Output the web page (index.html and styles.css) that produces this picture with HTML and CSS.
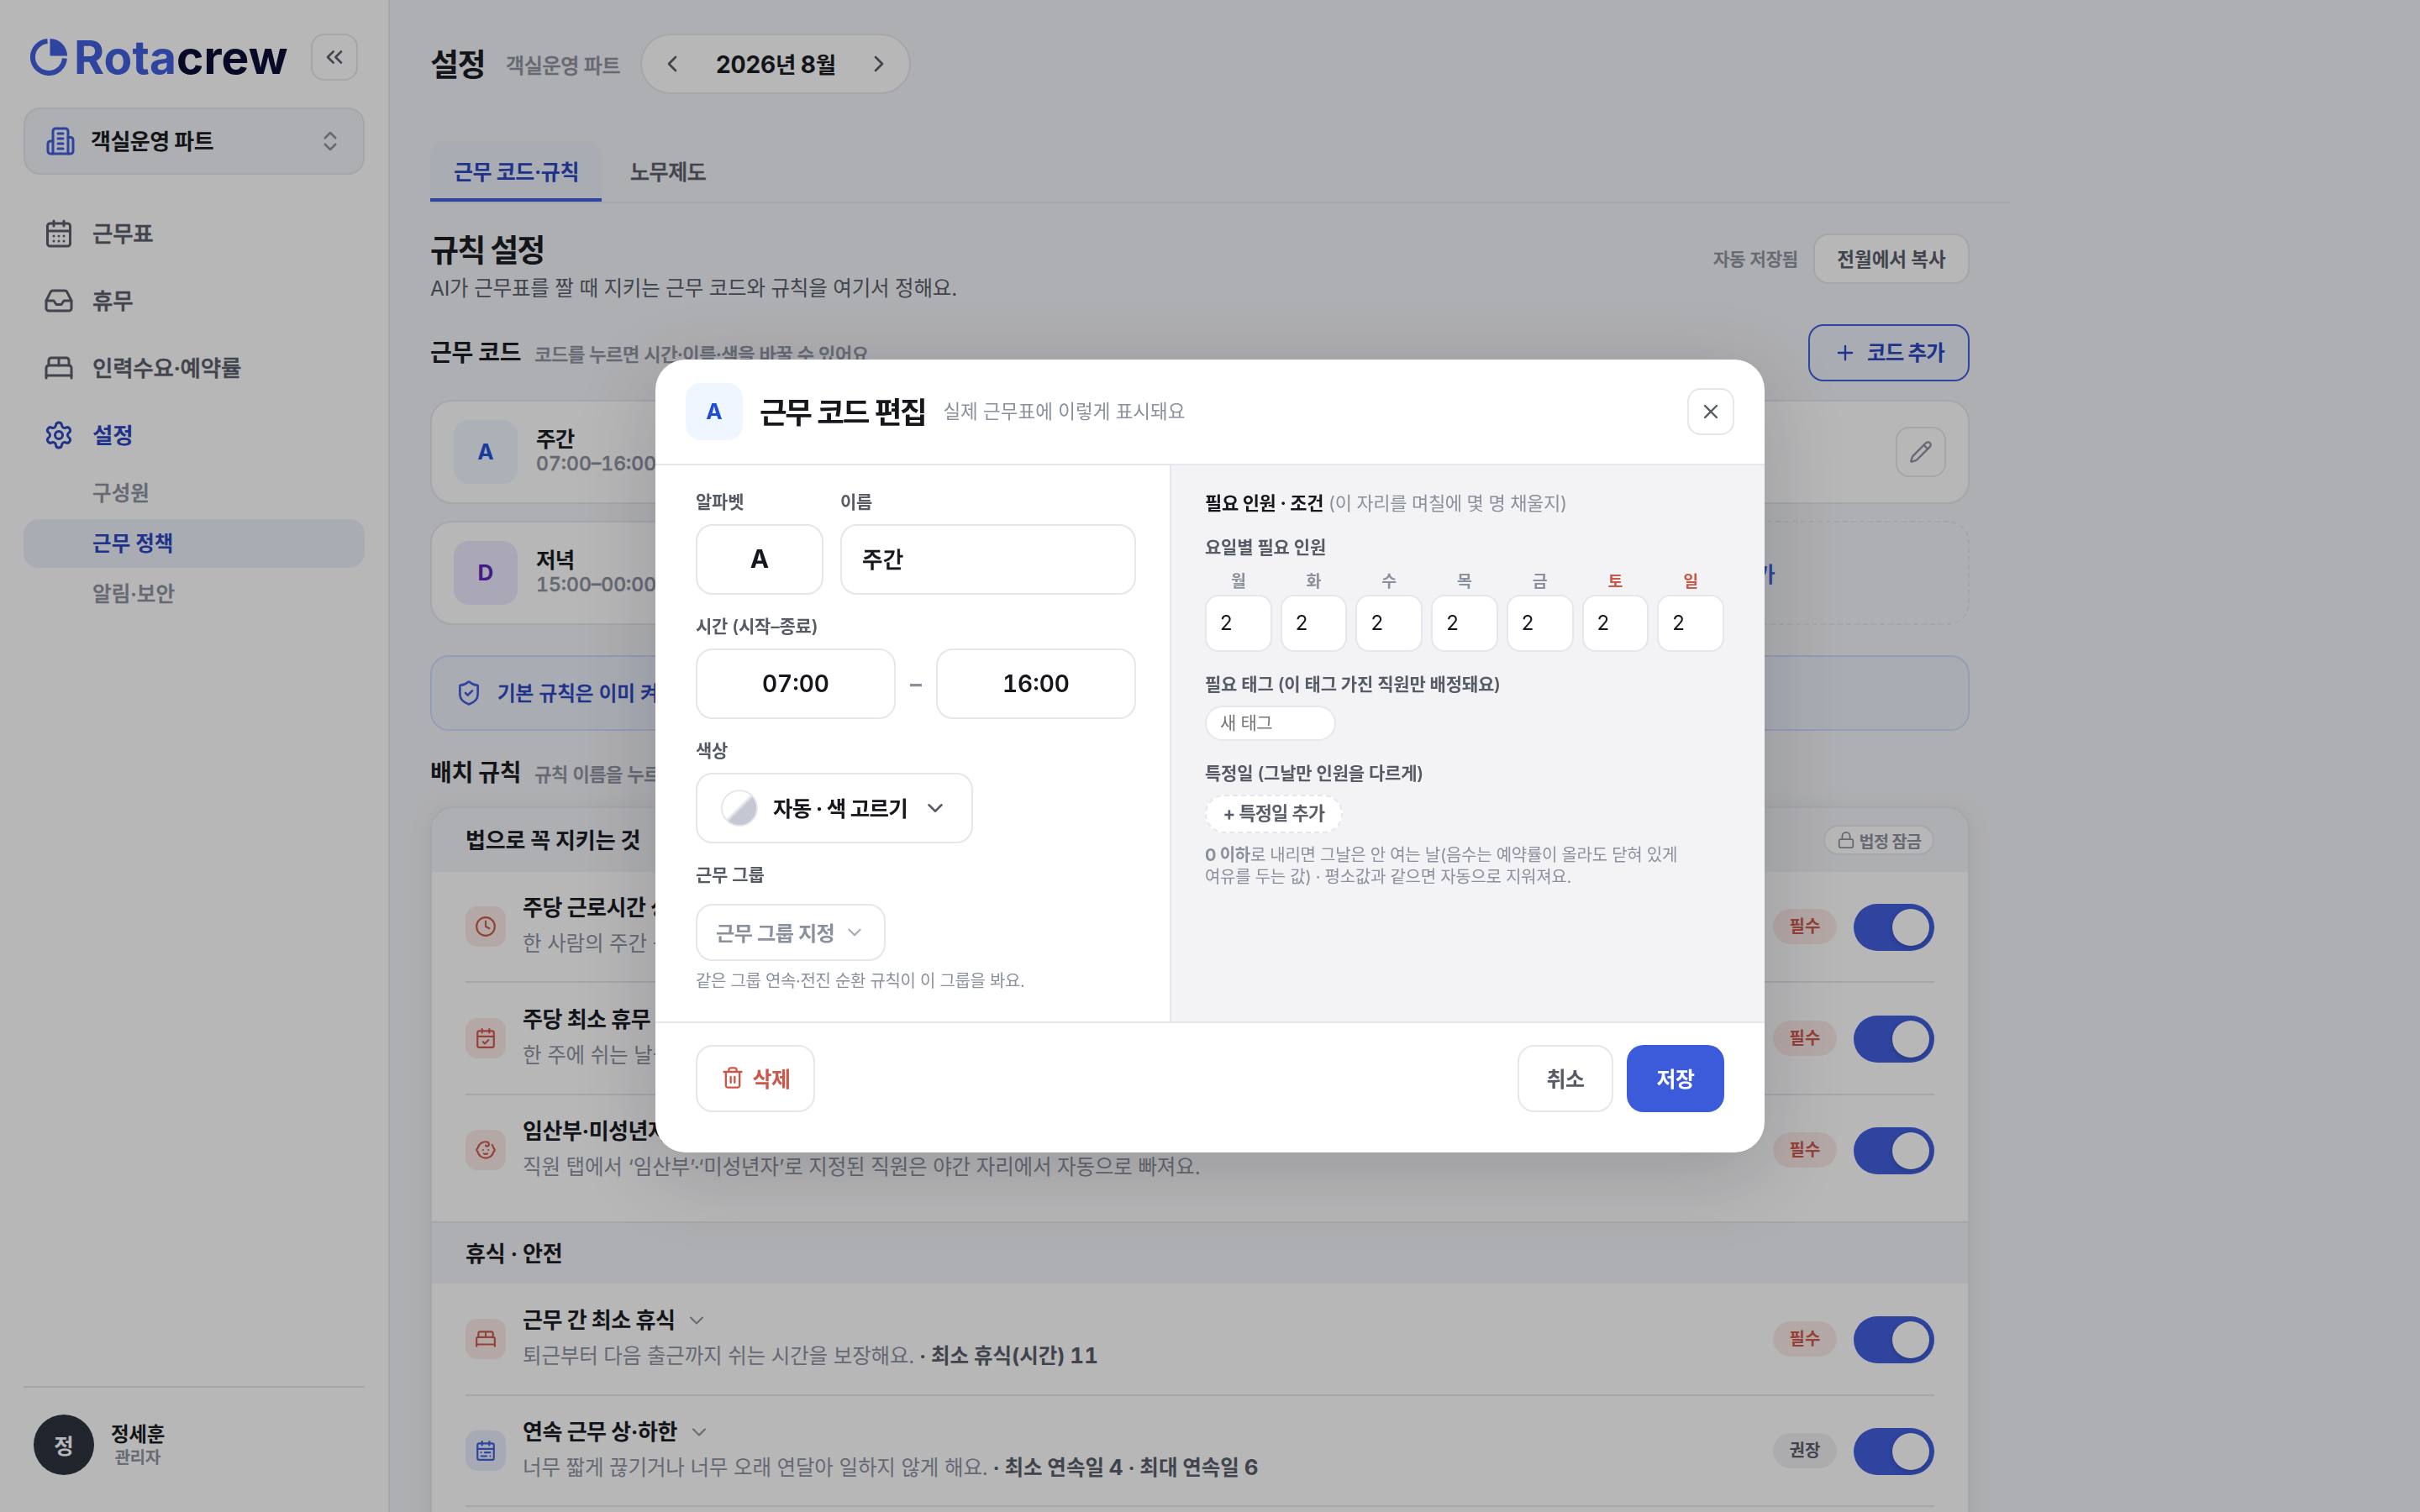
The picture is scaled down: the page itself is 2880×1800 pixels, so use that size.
FILE: index.html
```html
<!DOCTYPE html>
<html lang="ko">
<head>
<meta charset="utf-8">
<title>Rotacrew · 설정</title>
<link rel="stylesheet" href="styles.css">
</head>
<body>
<svg class="sprite" aria-hidden="true">
  <symbol id="i-chevrons-left" viewBox="0 0 24 24"><path d="m11 17-5-5 5-5M18 17l-5-5 5-5"/></symbol>
  <symbol id="i-building" viewBox="0 0 24 24"><path d="M6 22V4a2 2 0 0 1 2-2h8a2 2 0 0 1 2 2v18Z"/><path d="M6 12H4a2 2 0 0 0-2 2v6a2 2 0 0 0 2 2h2"/><path d="M18 9h2a2 2 0 0 1 2 2v9a2 2 0 0 1-2 2h-2"/><path d="M10 6h4M10 10h4M10 14h4M10 18h4"/></symbol>
  <symbol id="i-updown" viewBox="0 0 24 24"><path d="m7 15 5 5 5-5M7 9l5-5 5 5"/></symbol>
  <symbol id="i-cal-days" viewBox="0 0 24 24"><path d="M8 2v4M16 2v4M3 10h18"/><rect width="18" height="18" x="3" y="4" rx="2"/><path d="M8 14h.01M12 14h.01M16 14h.01M8 18h.01M12 18h.01M16 18h.01"/></symbol>
  <symbol id="i-inbox" viewBox="0 0 24 24"><path d="M22 12h-6l-2 3h-4l-2-3H2"/><path d="M5.45 5.11 2 12v6a2 2 0 0 0 2 2h16a2 2 0 0 0 2-2v-6l-3.45-6.89A2 2 0 0 0 16.76 4H7.24a2 2 0 0 0-1.79 1.11z"/></symbol>
  <symbol id="i-bed" viewBox="0 0 24 24"><path d="M2 20v-8a2 2 0 0 1 2-2h16a2 2 0 0 1 2 2v8"/><path d="M4 10V6a2 2 0 0 1 2-2h12a2 2 0 0 1 2 2v4M12 4v6M2 18h20"/></symbol>
  <symbol id="i-gear" viewBox="0 0 24 24"><path d="M9.671 4.136a2.34 2.34 0 0 1 4.659 0 2.34 2.34 0 0 0 3.319 1.915 2.34 2.34 0 0 1 2.33 4.033 2.34 2.34 0 0 0 0 3.831 2.34 2.34 0 0 1-2.33 4.033 2.34 2.34 0 0 0-3.319 1.915 2.34 2.34 0 0 1-4.659 0 2.34 2.34 0 0 0-3.32-1.915 2.34 2.34 0 0 1-2.33-4.033 2.34 2.34 0 0 0 0-3.831A2.34 2.34 0 0 1 6.35 6.051a2.34 2.34 0 0 0 3.319-1.915"/><circle cx="12" cy="12" r="3"/></symbol>
  <symbol id="i-left" viewBox="0 0 24 24"><path d="m15 18-6-6 6-6"/></symbol>
  <symbol id="i-right" viewBox="0 0 24 24"><path d="m9 18 6-6-6-6"/></symbol>
  <symbol id="i-down" viewBox="0 0 24 24"><path d="m6 9 6 6 6-6"/></symbol>
  <symbol id="i-plus" viewBox="0 0 24 24"><path d="M5 12h14M12 5v14"/></symbol>
  <symbol id="i-x" viewBox="0 0 24 24"><path d="M18 6 6 18M6 6l12 12"/></symbol>
  <symbol id="i-pencil" viewBox="0 0 24 24"><path d="M21.174 6.812a1 1 0 0 0-3.986-3.987L3.842 16.174a2 2 0 0 0-.5.83l-1.321 4.352a.5.5 0 0 0 .623.622l4.353-1.32a2 2 0 0 0 .83-.497z"/><path d="m15 5 4 4"/></symbol>
  <symbol id="i-shield" viewBox="0 0 24 24"><path d="M20 13c0 5-3.5 7.5-7.66 8.95a1 1 0 0 1-.67-.01C7.5 20.5 4 18 4 13V6a1 1 0 0 1 1-1c2 0 4.5-1.2 6.24-2.72a1.17 1.17 0 0 1 1.52 0C14.51 3.81 17 5 19 5a1 1 0 0 1 1 1z"/><path d="m9 12 2 2 4-4"/></symbol>
  <symbol id="i-lock" viewBox="0 0 24 24"><rect width="18" height="11" x="3" y="11" rx="2"/><path d="M7 11V7a5 5 0 0 1 10 0v4"/></symbol>
  <symbol id="i-clock" viewBox="0 0 24 24"><circle cx="12" cy="12" r="10"/><path d="M12 6v6l4 2"/></symbol>
  <symbol id="i-cal-check" viewBox="0 0 24 24"><path d="M8 2v4M16 2v4M3 10h18"/><rect width="18" height="18" x="3" y="4" rx="2"/><path d="m9 16 2 2 4-4"/></symbol>
  <symbol id="i-baby" viewBox="0 0 24 24"><path d="M9 12h.01M15 12h.01M10 16c.5.3 1.2.5 2 .5s1.5-.2 2-.5"/><path d="M19 6.3a9 9 0 0 1 1.8 3.9 2 2 0 0 1 0 3.6 9 9 0 0 1-17.6 0 2 2 0 0 1 0-3.6A9 9 0 0 1 12 3c2 0 3.5 1.1 3.5 2.5s-.9 2.5-2 2.5c-.8 0-1.5-.4-1.5-1"/></symbol>
  <symbol id="i-cal-range" viewBox="0 0 24 24"><path d="M8 2v4M16 2v4M3 10h18"/><rect width="18" height="18" x="3" y="4" rx="2"/><path d="M17 14h-6M13 18H7M7 14h.01M17 18h.01"/></symbol>
  <symbol id="i-trash" viewBox="0 0 24 24"><path d="M3 6h18M19 6v14c0 1-1 2-2 2H7c-1 0-2-1-2-2V6M8 6V4c0-1 1-2 2-2h4c1 0 2 1 2 2v2M10 11v6M14 11v6"/></symbol>
</svg>

<div class="app">
  <aside class="sidebar">
    <div class="brand-row">
      <div class="brand">
        <svg class="brand-mark" viewBox="0 0 44 44"><path d="M20.500 3.100A19 19 0 1 0 40.900 23.500" fill="none" stroke="currentColor" stroke-width="6"/><path d="M23.500 0v20.500H44A20.500 20.500 0 0 0 23.500 0z" fill="currentColor"/></svg>
        <span class="wordmark">Rota<span class="wordmark-dark">crew</span></span>
      </div>
      <button class="collapse"><svg class="icon s32"><use href="#i-chevrons-left"/></svg></button>
    </div>
    <button class="team">
      <svg class="icon s36 blue"><use href="#i-building"/></svg>
      <span class="team-name">객실운영 파트</span>
      <svg class="icon s30 faint"><use href="#i-updown"/></svg>
    </button>
    <nav class="nav">
      <a class="nav-item medium"><svg class="icon s36"><use href="#i-cal-days"/></svg><span>근무표</span></a>
      <a class="nav-item medium"><svg class="icon s36"><use href="#i-inbox"/></svg><span>휴무</span></a>
      <a class="nav-item medium"><svg class="icon s36"><use href="#i-bed"/></svg><span>인력수요·예약률</span></a>
      <a class="nav-item nav-item--active"><svg class="icon s36"><use href="#i-gear"/></svg><span>설정</span></a>
      <a class="nav-sub medium">구성원</a>
      <a class="nav-sub nav-sub--active">근무 정책</a>
      <a class="nav-sub medium">알림·보안</a>
    </nav>
    <div class="user">
      <div class="avatar">정</div>
      <div class="user-text"><span class="user-name">정세훈</span><span class="user-role medium">관리자</span></div>
    </div>
  </aside>

  <main class="main">
    <header class="topbar">
      <h1 class="page-title">설정</h1>
      <span class="page-team medium">객실운영 파트</span>
      <div class="month">
        <svg class="icon s32"><use href="#i-left"/></svg>
        <span class="month-label"><span class="num">2026</span>년 <span class="num">8</span>월</span>
        <svg class="icon s32"><use href="#i-right"/></svg>
      </div>
    </header>
    <div class="tabs">
      <a class="tab tab--active">근무 코드·규칙</a>
      <a class="tab medium">노무제도</a>
    </div>

    <div class="content">
      <div class="page-head">
        <div>
          <h2 class="h2">규칙 설정</h2>
          <p class="lead">AI가 근무표를 짤 때 지키는 근무 코드와 규칙을 여기서 정해요.</p>
        </div>
        <div class="page-actions">
          <span class="saved medium">자동 저장됨</span>
          <button class="btn-copy">전월에서 복사</button>
        </div>
      </div>

      <div class="section-head section-head--codes">
        <h3 class="h3">근무 코드</h3>
        <span class="section-note medium">코드를 누르면 시간·이름·색을 바꿀 수 있어요</span>
        <button class="btn-add"><svg class="icon s28"><use href="#i-plus"/></svg><span>코드 추가</span></button>
      </div>
      <div class="codes">
        <div class="code"><span class="chip chip--a">A</span><div class="code-text"><span class="code-name">주간</span><span class="code-time medium">07:00–16:00</span></div></div>
        <div class="code"></div>
        <div class="code"><button class="edit"><svg class="icon s28"><use href="#i-pencil"/></svg></button></div>
        <div class="code"><span class="chip chip--d">D</span><div class="code-text"><span class="code-name">저녁</span><span class="code-time medium">15:00–00:00</span></div></div>
        <div class="code"></div>
        <div class="code code--new"><svg class="icon s28"><use href="#i-plus"/></svg>코드 추가</div>
      </div>

      <div class="banner"><svg class="icon s32"><use href="#i-shield"/></svg><span class="medium">기본 규칙은 이미 켜져 있어요</span></div>

      <div class="section-head section-head--rules">
        <h3 class="h3">배치 규칙</h3>
        <span class="section-note medium">규칙 이름을 누르면</span>
      </div>

      <div class="rules">
        <div class="group-head"><span class="group-name">법으로 꼭 지키는 것</span>
          <span class="lock"><svg class="icon s22"><use href="#i-lock"/></svg>법정 잠금</span></div>
        <div class="group-body">
          <div class="rule">
            <span class="rule-icon rule-icon--red"><svg class="icon s26"><use href="#i-clock"/></svg></span>
            <div class="rule-text"><div class="rule-title">주당 근로시간 상한</div><div class="rule-desc">한 사람의 주간 근로</div></div>
            <span class="tag tag--red">필수</span><span class="toggle"></span>
          </div>
          <div class="rule rule--roomy">
            <span class="rule-icon rule-icon--red"><svg class="icon s26"><use href="#i-cal-check"/></svg></span>
            <div class="rule-text"><div class="rule-title">주당 최소 휴무</div><div class="rule-desc">한 주에 쉬는 날을</div></div>
            <span class="tag tag--red">필수</span><span class="toggle"></span>
          </div>
          <div class="rule">
            <span class="rule-icon rule-icon--red"><svg class="icon s26"><use href="#i-baby"/></svg></span>
            <div class="rule-text"><div class="rule-title">임산부·미성년자</div><div class="rule-desc">직원 탭에서 ‘임산부’·‘미성년자’로 지정된 직원은 야간 자리에서 자동으로 빠져요.</div></div>
            <span class="tag tag--red">필수</span><span class="toggle"></span>
          </div>
        </div>
        <div class="group-head group-head--next"><span class="group-name">휴식 · 안전</span></div>
        <div class="group-body">
          <div class="rule rule--roomy">
            <span class="rule-icon rule-icon--red"><svg class="icon s26"><use href="#i-bed"/></svg></span>
            <div class="rule-text"><div class="rule-title">근무 간 최소 휴식<svg class="icon s28 thin"><use href="#i-down"/></svg></div><div class="rule-desc">퇴근부터 다음 출근까지 쉬는 시간을 보장해요. <b>· 최소 휴식(시간) <span class="num">11</span></b></div></div>
            <span class="tag tag--red">필수</span><span class="toggle"></span>
          </div>
          <div class="rule">
            <span class="rule-icon rule-icon--blue"><svg class="icon s26"><use href="#i-cal-range"/></svg></span>
            <div class="rule-text"><div class="rule-title">연속 근무 상·하한<svg class="icon s28 thin"><use href="#i-down"/></svg></div><div class="rule-desc">너무 짧게 끊기거나 너무 오래 연달아 일하지 않게 해요. <b>· 최소 연속일 <span class="num">4</span> · 최대 연속일 <span class="num">6</span></b></div></div>
            <span class="tag">권장</span><span class="toggle"></span>
          </div>
          <div class="rule"></div>
        </div>
      </div>
    </div>
  </main>
</div>

<div class="overlay">
  <section class="modal">
    <header class="modal-head">
      <span class="chip chip--modal">A</span>
      <h2 class="modal-title">근무 코드 편집</h2>
      <span class="modal-sub">실제 근무표에 이렇게 표시돼요</span>
      <button class="close"><svg class="icon s28"><use href="#i-x"/></svg></button>
    </header>
    <div class="modal-body">
      <div class="pane">
        <div class="field-row">
          <div class="field field--letter"><label class="label">알파벳</label><div class="input input--center input--letter">A</div></div>
          <div class="field field--grow"><label class="label">이름</label><div class="input input--name medium">주간</div></div>
        </div>
        <div class="field">
          <label class="label">시간 (시작–종료)</label>
          <div class="times"><div class="input input--center input--time">07:00</div><span class="dash">–</span><div class="input input--center input--time">16:00</div></div>
        </div>
        <div class="field">
          <label class="label">색상</label>
          <button class="color-btn"><span class="swatch"></span><span class="color-name">자동 · 색 고르기</span><svg class="icon s30"><use href="#i-down"/></svg></button>
        </div>
        <div class="field">
          <label class="label label--group">근무 그룹</label>
          <button class="group-btn"><span>근무 그룹 지정</span><svg class="icon s26"><use href="#i-down"/></svg></button>
          <p class="hint">같은 그룹 연속·전진 순환 규칙이 이 그룹을 봐요.</p>
        </div>
      </div>
      <div class="pane pane--side">
        <p class="side-title"><b>필요 인원 · 조건</b> (이 자리를 며칠에 몇 명 채울지)</p>
        <label class="label label--days">요일별 필요 인원</label>
        <div class="days">
          <div class="day"><span class="day-name">월</span><div class="day-input">2</div></div>
          <div class="day"><span class="day-name">화</span><div class="day-input">2</div></div>
          <div class="day"><span class="day-name">수</span><div class="day-input">2</div></div>
          <div class="day"><span class="day-name">목</span><div class="day-input">2</div></div>
          <div class="day"><span class="day-name">금</span><div class="day-input">2</div></div>
          <div class="day day--off"><span class="day-name">토</span><div class="day-input">2</div></div>
          <div class="day day--off"><span class="day-name">일</span><div class="day-input">2</div></div>
        </div>
        <label class="label label--tag">필요 태그 (이 태그 가진 직원만 배정돼요)</label>
        <div class="tag-input">새 태그</div>
        <label class="label label--date">특정일 (그날만 인원을 다르게)</label>
        <button class="date-btn medium">+ 특정일 추가</button>
        <p class="note"><b>0 이하</b>로 내리면 그날은 안 여는 날(음수는 예약률이 올라도 닫혀 있게<br>여유를 두는 값) · 평소값과 같으면 자동으로 지워져요.</p>
      </div>
    </div>
    <footer class="modal-foot">
      <button class="btn btn--delete"><svg class="icon s28"><use href="#i-trash"/></svg>삭제</button>
      <button class="btn btn--cancel">취소</button>
      <button class="btn btn--save">저장</button>
    </footer>
  </section>
</div>
</body>
</html>
```
FILE: styles.css
```css
* { box-sizing: border-box; margin: 0; padding: 0; }

:root {
  --ink: #15171c;
  --body: #565b66;
  --muted: #8b909d;
  --line: #e6e7ec;
  --canvas: #f3f4f6;
  --blue: #3b5bdb;
  --blue-deep: #2742bd;
  --blue-soft: #edf0fa;
  --red: #cd5649;
}

html, body { width: 2880px; height: 1800px; overflow: hidden; }

body {
  background: var(--canvas);
  color: var(--ink);
  font-family: Inter, "Noto Sans CJK KR", sans-serif;
}

button { font: inherit; color: inherit; background: none; border: 0; letter-spacing: inherit; }
b { font-weight: 700; }
.medium { -webkit-text-stroke: 0.5px currentColor; }

.sprite { display: none; }
.icon { fill: none; stroke: currentColor; stroke-width: 2; stroke-linecap: round; stroke-linejoin: round; flex: none; }
.s22 { width: 22px; height: 22px; }
.s26 { width: 26px; height: 26px; }
.s28 { width: 28px; height: 28px; }
.s30 { width: 30px; height: 30px; }
.s32 { width: 32px; height: 32px; }
.s36 { width: 36px; height: 36px; }
.blue { color: var(--blue); }
.faint { color: var(--muted); }
.thin { color: var(--muted); stroke-width: 1.75; }

.app { display: flex; width: 2880px; height: 1800px; overflow: hidden; }

/* Sidebar */
.sidebar { width: 464px; flex: none; background: #fff; border-right: 2px solid var(--line); padding: 40px 28px 44px; display: flex; flex-direction: column; }
.brand-row { display: flex; align-items: center; justify-content: space-between; height: 56px; padding: 0 8px; }
.brand { display: flex; align-items: center; gap: 8px; color: var(--blue); }
.brand-mark { width: 44px; height: 44px; }
.wordmark { font-size: 55px; line-height: 56px; font-weight: 700; letter-spacing: 0.1px; margin-top: -1px; }
.wordmark-dark { color: #05062e; }
.collapse { width: 56px; height: 56px; border: 2px solid var(--line); border-radius: 16px; display: flex; align-items: center; justify-content: center; color: var(--body); }
.team { margin-top: 32px; height: 80px; border: 2px solid var(--line); border-radius: 20px; background: var(--canvas); display: flex; align-items: center; padding: 0 24px; }
.team-name { margin-left: 18px; padding-top: 1px; flex: 1; text-align: left; font-size: 26px; line-height: 40px; font-weight: 700; letter-spacing: -0.5px; }
.nav { margin-top: 30px; display: flex; flex-direction: column; color: var(--body); font-weight: 500; }
.nav-item { height: 80px; display: flex; align-items: center; gap: 22px; padding-left: 24px; font-size: 26.5px; letter-spacing: -0.2px; }
.nav-item span { padding-bottom: 3px; }
.nav-item--active { color: var(--blue-deep); font-weight: 700; }
.nav-sub { height: 58px; line-height: 59px; padding-left: 82px; border-radius: 18px; font-size: 24.5px; color: var(--muted); margin-bottom: 2px; letter-spacing: 0.1px; }
.nav-sub--active { background: var(--blue-soft); color: var(--blue-deep); font-weight: 700; }
.user { margin-top: auto; border-top: 2px solid var(--line); height: 106px; padding: 32px 12px 0; display: flex; align-items: center; gap: 20px; }
.avatar { width: 72px; height: 72px; border-radius: 50%; background: #292e39; color: #fff; display: flex; align-items: center; justify-content: center; font-size: 25.5px; font-weight: 700; padding-bottom: 1px; }
.user-text { display: flex; flex-direction: column; align-items: center; }
.user-name { font-size: 23.5px; line-height: 29px; font-weight: 700; letter-spacing: -0.3px; }
.user-role { font-size: 19.8px; line-height: 26px; font-weight: 500; color: var(--muted); }

/* Main column */
.main { width: 1976px; padding: 40px 48px 0; flex: none; }
.topbar { height: 72px; display: flex; align-items: center; white-space: nowrap; }
.page-title { padding-top: 4px; font-size: 37px; line-height: 48px; font-weight: 700; letter-spacing: -1.5px; }
.page-team { margin-left: 25px; font-size: 24px; font-weight: 500; letter-spacing: -0.4px; color: var(--muted); }
.month { margin-left: 24px; width: 322px; height: 72px; border: 2px solid var(--line); border-radius: 36px; background: #fff; display: flex; align-items: center; justify-content: space-between; padding: 0 20px; color: var(--body); }
.month-label { color: var(--ink); font-size: 26.5px; font-weight: 700; letter-spacing: -0.35px; padding-bottom: 2px; }
.num { font-size: 1.06em; font-feature-settings: "tnum"; }
.tabs { margin-top: 56px; height: 74px; border-bottom: 2px solid var(--line); display: flex; gap: 6px; font-size: 25px; font-weight: 500; letter-spacing: -0.4px; color: var(--body); width: 1880px; white-space: nowrap; }
.tab { height: 72px; line-height: 75px; padding: 0 28px; }
.tab--active { width: 204px; background: var(--blue-soft); color: var(--blue-deep); font-weight: 700; border-bottom: 4px solid var(--blue); border-radius: 16px 16px 0 0; }

.content { width: 1832px; padding-top: 32px; }
.page-head { height: 112px; display: flex; justify-content: space-between; }
.h2 { font-size: 37px; line-height: 50px; font-weight: 700; letter-spacing: -1.9px; }
.lead { padding-top: 1px; font-size: 24.5px; line-height: 37px; letter-spacing: -0.18px; color: var(--body); }
.page-actions { margin-top: 4px; height: 60px; display: flex; align-items: center; gap: 18px; }
.saved { font-size: 21px; font-weight: 500; letter-spacing: -0.18px; padding-bottom: 2px; color: var(--muted); }
.btn-copy { width: 186px; height: 60px; border: 2px solid var(--line); border-radius: 18px; background: #fff; font-size: 22.5px; font-weight: 700; color: var(--body); padding-bottom: 3px; }

.section-head { display: flex; align-items: center; }
.section-head--codes { height: 68px; }
.section-head--rules { height: 52px; margin: 24px 0 14px; }
.h3 { font-size: 28px; line-height: 40px; font-weight: 700; letter-spacing: -0.3px; }
.section-note { margin-left: 16px; font-size: 22px; font-weight: 500; letter-spacing: -0.38px; padding-bottom: 1px; color: var(--muted); }
.btn-add { margin-left: auto; width: 192px; height: 68px; border: 2px solid var(--blue); border-radius: 18px; background: var(--blue-soft); color: var(--blue-deep); font-size: 24.5px; font-weight: 700; letter-spacing: -0.8px; display: flex; align-items: center; justify-content: center; gap: 12px; }
.btn-add span { padding-bottom: 3px; }

.codes { margin-top: 22px; display: grid; grid-template-columns: repeat(3, 1fr); grid-auto-rows: 124px; gap: 20px; }
.code { background: #fff; border: 2px solid var(--line); border-radius: 26px; padding: 0 26px; display: flex; align-items: center; }
.chip { width: 76px; height: 76px; border-radius: 18px; display: flex; align-items: center; justify-content: center; font-size: 26px; font-weight: 700; flex: none; padding-bottom: 1px; }
.chip--a, .chip--modal { background: #eff6ff; color: #1d4ed8; }
.chip--d { background: #ede9fe; color: #5b21b6; }
.code-text { margin-left: 22px; display: flex; flex-direction: column; }
.code-name { font-size: 25.5px; line-height: 28px; font-weight: 700; letter-spacing: -0.8px; }
.code-time { font-size: 23px; line-height: 30px; font-weight: 500; color: var(--muted); font-feature-settings: "tnum"; }
.edit { margin-left: auto; width: 60px; height: 60px; border: 2px solid var(--line); border-radius: 16px; display: flex; align-items: center; justify-content: center; color: var(--muted); }
.code--new { background: none; border-style: dashed; color: var(--blue); justify-content: center; gap: 10px; font-size: 24.5px; font-weight: 600; }

.banner { margin-top: 36px; height: 90px; border: 2px solid #cfd8fb; border-radius: 22px; background: var(--blue-soft); color: var(--blue-deep); display: flex; align-items: center; gap: 18px; padding: 0 28px; font-size: 23.5px; font-weight: 500; }
.banner span { padding-bottom: 3px; }
.banner .icon { color: var(--blue); }

.rules { border: 2px solid var(--line); border-radius: 28px; background: #fff; overflow: hidden; box-shadow: 0 4px 28px rgba(15, 18, 25, .08); }
.group-head { height: 76px; background: var(--canvas); padding: 0 40px; display: flex; align-items: center; justify-content: space-between; font-size: 26px; font-weight: 700; letter-spacing: -0.15px; }
.group-name { padding-bottom: 3px; }
.group-head--next { height: 74px; border-top: 2px solid var(--line); }
.lock { height: 36px; width: 132px; border: 2px solid var(--line); border-radius: 18px; background: #fff; color: var(--muted); display: flex; align-items: center; justify-content: center; gap: 5px; font-size: 19.5px; letter-spacing: -0.5px; }
.group-body { padding: 0 40px 18px; }
.rule { height: 132px; border-bottom: 2px solid var(--line); display: flex; align-items: center; }
.rule--roomy { height: 134px; }
.rule:last-child { border-bottom-color: transparent; }
.rule-icon { width: 48px; height: 48px; border-radius: 14px; display: flex; align-items: center; justify-content: center; flex: none; }
.rule-icon--red { background: #fbeae6; color: var(--red); }
.rule-icon--blue { background: #e9edfa; color: var(--blue); }
.rule-text { margin-left: 20px; flex: 1; padding-bottom: 3px; }
.rule-title { font-size: 26px; line-height: 42px; font-weight: 700; letter-spacing: -0.45px; display: flex; align-items: center; gap: 12px; }
.rule-desc { font-size: 24.5px; line-height: 42px; letter-spacing: -0.14px; color: var(--muted); white-space: nowrap; }
.rule-desc b { color: var(--body); margin-left: -1px; letter-spacing: 0; }
.tag { width: 76px; height: 42px; border-radius: 21px; background: #efeff3; color: var(--body); font-size: 20px; line-height: 42px; font-weight: 700; text-align: center; }
.tag--red { background: #fbeae6; color: var(--red); }
.toggle { margin: 2px 0 0 20px; width: 96px; height: 56px; border-radius: 28px; background: var(--blue); padding: 6px; display: flex; justify-content: flex-end; }
.toggle::after { content: ""; width: 44px; height: 44px; border-radius: 50%; background: #fff; box-shadow: 0 2px 6px rgba(0, 0, 0, .2); }

/* Dialog */
.overlay { position: fixed; inset: 0; background: rgba(15, 18, 21, .3); display: flex; align-items: center; justify-content: center; }
.modal { width: 1320px; height: 944px; background: #fff; border-radius: 36px; overflow: hidden; box-shadow: 0 24px 96px rgba(15, 18, 25, .18); display: flex; flex-direction: column; }
.modal-head { height: 126px; border-bottom: 2px solid var(--line); padding: 0 36px; display: flex; align-items: center; }
.chip--modal { width: 68px; height: 68px; }
.modal-title { margin-left: 20px; padding-bottom: 3px; font-size: 35.5px; font-weight: 700; letter-spacing: -2.3px; word-spacing: 1.5px; }
.modal-sub { margin-left: 21px; padding-bottom: 4px; font-size: 22.5px; color: var(--muted); }
.close { margin-left: auto; width: 56px; height: 56px; border: 2px solid var(--line); border-radius: 16px; display: flex; align-items: center; justify-content: center; color: var(--body); }
.modal-body { height: 662px; display: flex; }
.pane { width: 612px; padding: 29px 40px 0 48px; }
.pane--side { flex: 1; background: #f3f3f6; border-left: 2px solid var(--line); padding: 29px 48px 0 40px; }
.field-row { display: flex; gap: 20px; }
.field--letter { width: 152px; }
.field--grow { flex: 1; }
.label { display: block; font-size: 21px; line-height: 29px; font-weight: 600; letter-spacing: -0.2px; color: var(--body); margin-bottom: 12px; }
.input { height: 84px; border: 2px solid var(--line); border-radius: 20px; display: flex; align-items: center; padding: 0 24px; }
.input--center { justify-content: center; }
.input--letter { font-size: 30px; font-weight: 700; padding-bottom: 2px; }
.input--name { font-size: 26.5px; font-weight: 500; letter-spacing: 0.3px; padding-bottom: 3px; }
.input--time { width: 238px; font-size: 28px; font-weight: 600; font-feature-settings: "tnum"; }
.times { display: flex; align-items: center; justify-content: space-between; }
.dash { color: var(--muted); font-weight: 700; font-size: 28px; }
.pane .field { margin-bottom: 23px; }
.color-btn { width: 330px; height: 84px; border: 2px solid var(--line); border-radius: 20px; display: flex; align-items: center; padding: 0 28px; font-size: 25.5px; font-weight: 700; letter-spacing: -0.75px; }
.color-name { padding-bottom: 3px; }
.swatch { width: 44px; height: 44px; margin-right: 18px; border: 2px solid var(--line); border-radius: 50%; background: linear-gradient(135deg, #fff 45%, #c5c8d2 55%); }
.color-btn .icon { margin-left: auto; color: var(--body); }
.label--group { margin-bottom: 20px; }
.group-btn { width: 226px; height: 68px; border: 2px solid var(--line); border-radius: 20px; display: flex; align-items: center; justify-content: space-between; padding: 0 22px; font-size: 24.2px; font-weight: 600; letter-spacing: -0.55px; color: var(--muted); }
.group-btn span { padding-bottom: 2px; }
.group-btn .icon { color: #a7abb5; }
.hint { margin-top: 9px; font-size: 20px; line-height: 30px; letter-spacing: -0.32px; color: var(--muted); }
.side-title { font-size: 22px; line-height: 32px; letter-spacing: -0.33px; color: var(--muted); }
.side-title b { color: var(--ink); }
.label--days { margin: 22px 0 10px; }
.days { display: grid; grid-template-columns: repeat(7, 1fr); gap: 10px; }
.day-name { display: block; height: 32px; line-height: 32px; text-align: center; font-size: 19.5px; font-weight: 600; color: var(--muted); }
.day--off .day-name { color: var(--red); font-weight: 700; }
.day-input { height: 68px; border: 2px solid var(--line); border-radius: 16px; background: #fff; padding-left: 16px; line-height: 64px; font-size: 24px; }
.label--tag { margin: 24px 0 11px; }
.tag-input { width: 156px; height: 42px; border: 2px solid var(--line); border-radius: 21px; background: #fff; padding-left: 16px; font-size: 21px; line-height: 37px; letter-spacing: -0.4px; color: #757575; }
.label--date { margin: 24px 0 11px; }
.date-btn { display: block; width: 164px; height: 46px; border: 2px dashed var(--line); border-radius: 23px; background: #fff; font-size: 21.5px; font-weight: 500; letter-spacing: -0.5px; padding-bottom: 5px; color: var(--body); }
.note { margin-top: 13px; font-size: 20px; line-height: 26px; letter-spacing: -0.28px; color: var(--muted); white-space: nowrap; }
.modal-foot { border-top: 2px solid var(--line); padding: 26px 48px; display: flex; gap: 16px; flex: 1; }
.btn { height: 80px; border: 2px solid var(--line); border-radius: 20px; font-size: 25px; font-weight: 700; letter-spacing: -0.6px; padding-bottom: 2px; }
.btn--delete { width: 142px; margin-right: auto; color: var(--red); display: flex; align-items: center; justify-content: center; gap: 10px; }
.btn--cancel { width: 114px; color: var(--body); }
.btn--save { width: 116px; border: 0; background: var(--blue); color: #fff; }
```
